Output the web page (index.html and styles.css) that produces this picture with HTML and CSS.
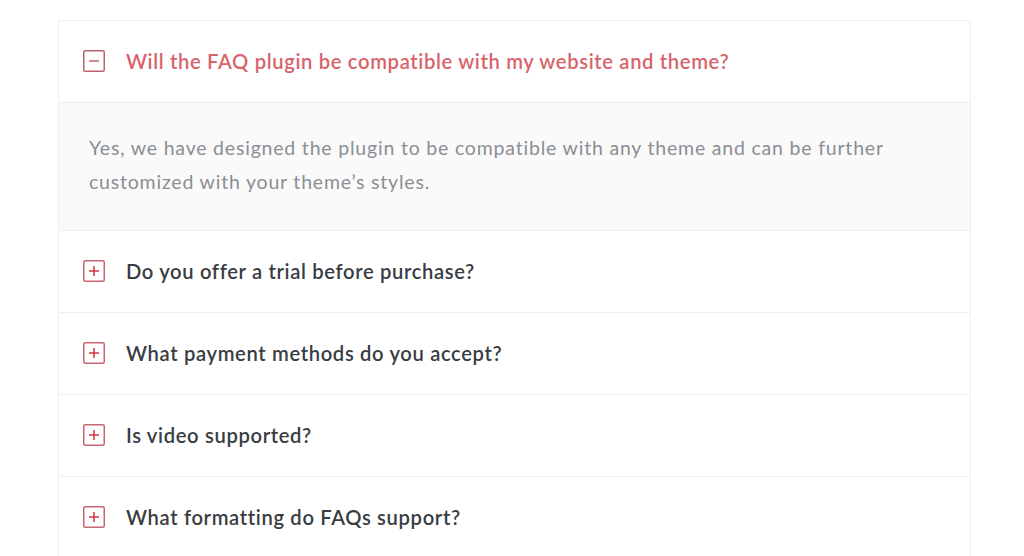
FILE: index.html
```html
<!DOCTYPE html>
<html>
<head>
<meta charset="utf-8">
<link rel="stylesheet" href="styles.css">
</head>
<body>
<div class="faq">
  <div class="item open">
    <div class="q">
      <span class="icon minus"><svg viewBox="0 0 22 22" width="22" height="22"><rect x="0.75" y="0.75" width="20.5" height="20.5" rx="1.5" fill="none" stroke="#b9646d" stroke-width="1.5"/><path d="M6 11h10" stroke="#b9646d" stroke-width="1.5"/></svg></span>
      <span class="qt">Will the FAQ plugin be compatible with my website and theme?</span>
    </div>
    <div class="a">Yes, we have designed the plugin to be compatible with any theme and can be further customized with your theme’s styles.</div>
  </div>
  <div class="item">
    <div class="q">
      <span class="icon"><svg viewBox="0 0 22 22" width="22" height="22"><rect x="0.75" y="0.75" width="20.5" height="20.5" rx="1.5" fill="none" stroke="#c9656f" stroke-width="1.5"/><path d="M6 11h10M11 6v10" stroke="#d8333f" stroke-width="1.5"/></svg></span>
      <span class="qt">Do you offer a trial before purchase?</span>
    </div>
  </div>
  <div class="item">
    <div class="q">
      <span class="icon"><svg viewBox="0 0 22 22" width="22" height="22"><rect x="0.75" y="0.75" width="20.5" height="20.5" rx="1.5" fill="none" stroke="#c9656f" stroke-width="1.5"/><path d="M6 11h10M11 6v10" stroke="#d8333f" stroke-width="1.5"/></svg></span>
      <span class="qt">What payment methods do you accept?</span>
    </div>
  </div>
  <div class="item">
    <div class="q">
      <span class="icon"><svg viewBox="0 0 22 22" width="22" height="22"><rect x="0.75" y="0.75" width="20.5" height="20.5" rx="1.5" fill="none" stroke="#c9656f" stroke-width="1.5"/><path d="M6 11h10M11 6v10" stroke="#d8333f" stroke-width="1.5"/></svg></span>
      <span class="qt">Is video supported?</span>
    </div>
  </div>
  <div class="item">
    <div class="q">
      <span class="icon"><svg viewBox="0 0 22 22" width="22" height="22"><rect x="0.75" y="0.75" width="20.5" height="20.5" rx="1.5" fill="none" stroke="#c9656f" stroke-width="1.5"/><path d="M6 11h10M11 6v10" stroke="#d8333f" stroke-width="1.5"/></svg></span>
      <span class="qt">What formatting do FAQs support?</span>
    </div>
  </div>
</div>
</body>
</html>
```
FILE: styles.css
```css
html, body {
  margin: 0;
  padding: 0;
  background: #ffffff;
}
body {
  font-family: "Lato", "Liberation Sans", sans-serif;
  padding: 20px 0 0 58px;
  height: 556px;
  overflow: hidden;
  box-sizing: border-box;
}
.faq {
  width: 913px;
  border: 1px solid #efefef;
  border-bottom: none;
  box-sizing: border-box;
}
.item {
  border-bottom: 1px solid #efefef;
}
.q {
  height: 81px;
  box-sizing: border-box;
  padding-bottom: 2px;
  display: flex;
  align-items: center;
  padding-left: 24px;
  gap: 21px;
}
.icon {
  display: flex;
  width: 22px;
  height: 22px;
  flex: none;
}
.qt {
  font-size: 20.2px;
  font-weight: 600;
  color: #383d43;
  letter-spacing: 0.65px;
}
.open .qt {
  color: #d7636b;
}
.a {
  background: #fafafa;
  border-top: 1px solid #efefef;
  padding: 28px 60px 31px 30px;
  font-size: 19.5px;
  line-height: 34px;
  color: #8b8e94;
  letter-spacing: 0.8px;
}
```
